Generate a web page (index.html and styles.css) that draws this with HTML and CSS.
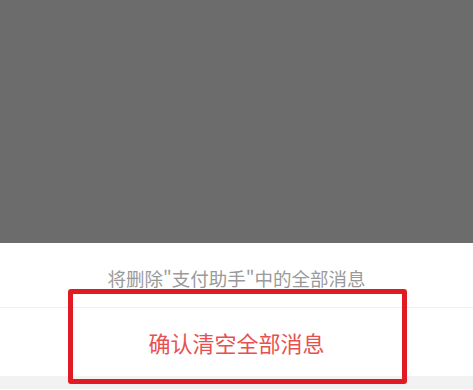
FILE: index.html
```html
<!DOCTYPE html>
<html lang="zh-CN">
<head>
    <meta charset="UTF-8">
    <meta name="viewport" content="width=device-width, initial-scale=1.0">
    <title>清空消息</title>
    <link rel="stylesheet" href="styles.css">
</head>
<body>
    <div class="mask"></div>
    <div class="sheet">
        <div class="sheet-title">将删除"支付助手"中的全部消息</div>
        <div class="sheet-action">确认清空全部消息</div>
        <div class="sheet-gap"></div>
    </div>
    <div class="highlight"></div>
</body>
</html>
```

FILE: styles.css
```css
body {
    margin: 0;
    font-family: "Noto Sans CJK SC", "Noto Sans", sans-serif;
    background: #fff;
    position: relative;
    height: 390px;
    overflow: hidden;
}

.mask {
    height: 243px;
    background-color: #6c6c6c;
}

.sheet {
    background: #fff;
}

.sheet-title {
    height: 65px;
    box-sizing: border-box;
    padding-top: 5px;
    display: flex;
    justify-content: center;
    align-items: center;
    font-size: 18.5px;
    color: #9a9a9a;
    border-bottom: 1px solid #f0f0f0;
}

.sheet-action {
    height: 68px;
    display: flex;
    justify-content: center;
    align-items: center;
    font-size: 22px;
    color: #e8504f;
}

.sheet-gap {
    height: 13px;
    background-color: #f2f2f2;
}

.highlight {
    position: absolute;
    left: 68px;
    top: 289px;
    width: 339px;
    height: 95px;
    box-sizing: border-box;
    border: 5px solid #e01b24;
    border-radius: 3px;
}
```
